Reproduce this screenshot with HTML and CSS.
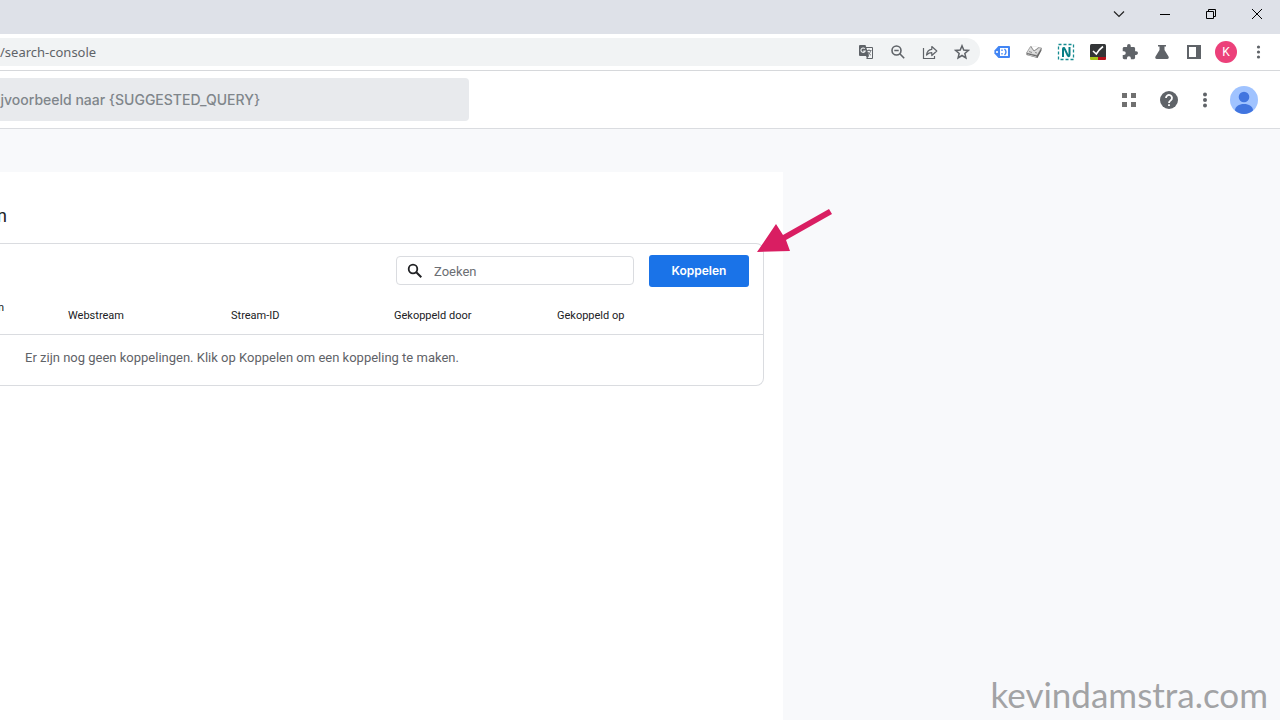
FILE: index.html
```html
<!DOCTYPE html>
<html lang="nl">
<head>
<meta charset="utf-8">
<meta name="viewport" content="width=device-width, initial-scale=1">
<title>Search Console-koppelingen</title>
<link rel="stylesheet" href="styles.css">
</head>
<body>
<div class="window">
  <div class="titlebar">
    <button class="win-btn" aria-label="Tabbladen zoeken"><svg width="12" height="12" viewBox="0 0 12 12"><path d="M1 3.500l5 5 5-5" fill="none" stroke="#222" stroke-width="1.200"/></svg></button>
    <button class="win-btn" aria-label="Minimaliseren"><svg width="12" height="12" viewBox="0 0 12 12"><path d="M1 6.500h10" stroke="#000"/></svg></button>
    <button class="win-btn" aria-label="Verkleinen"><svg width="12" height="12" viewBox="0 0 12 12"><path d="M1.500 3.500h7v7h-7zM3.500 3.500v-2h7v7h-2" fill="none" stroke="#000"/></svg></button>
    <button class="win-btn" aria-label="Sluiten"><svg width="12" height="12" viewBox="0 0 12 12"><path d="M1 1l10 10M11 1L1 11" stroke="#000"/></svg></button>
  </div>

  <div class="toolbar">
    <div class="omnibox">
      <input class="url" type="text" value="/search-console" aria-label="Adres">
      <button class="icon-btn" aria-label="Vertalen"><svg width="16" height="16" viewBox="0 0 16 16"><path d="M7 3.500h7.500v11H8.500" fill="#f1f3f4" stroke="#5f6368"/><path d="M2 1h5.500l3.500 11H2a1 1 0 0 1-1-1V2a1 1 0 0 1 1-1z" fill="#5f6368"/><path d="M6.800 4.700A2.200 2.200 0 1 0 7.200 7H5.200" fill="none" stroke="#f1f3f4" stroke-width="1.100"/><path d="M9 6.500h4.500M11 5.300v1.200M12.700 6.500c-.3 2-1.500 3.300-3 4.300M10 8c.7 1.500 1.700 2.500 3 3.200" fill="none" stroke="#5f6368" stroke-width=".8"/><path d="M8 12h3l-2 2.700z" fill="#5f6368"/></svg></button>
      <button class="icon-btn" aria-label="Uitzoomen"><svg width="16" height="16" viewBox="0 0 16 16"><circle cx="6.500" cy="6.500" r="4.500" fill="none" stroke="#5f6368" stroke-width="1.600"/><path d="M4.300 6.500h4.400M9.800 9.800l4.400 4.400" stroke="#5f6368" stroke-width="1.600"/></svg></button>
      <button class="icon-btn" aria-label="Delen"><svg width="16" height="16" viewBox="0 0 16 16"><path d="M1.500 4v10.500h11v-2.500" fill="none" stroke="#5f6368" stroke-width="1.200"/><path d="M4.500 11c.4-3.600 2.200-5.500 5.300-5.700V2.500l5 4.500-5 4.500V8.700C7.500 8.700 6 9.400 4.500 11z" fill="none" stroke="#5f6368" stroke-width="1.200" stroke-linejoin="round"/></svg></button>
      <button class="icon-btn" aria-label="Bladwijzer"><svg width="16" height="16" viewBox="0 0 16 16"><path d="M8 1.800l1.750 4.200 4.550.4-3.450 3 1.050 4.500L8 11.500l-3.900 2.400 1.050-4.500-3.450-3 4.550-.4z" fill="none" stroke="#5f6368" stroke-width="1.500"/></svg></button>
    </div>
    <div class="extensions">
      <button class="icon-btn" aria-label="Tag Assistant"><svg width="16" height="16" viewBox="0 0 16 16"><path d="M4.500 2H15a1 1 0 0 1 1 1v10a1 1 0 0 1-1 1H4.500L.4 9.500v-3z" fill="#4285f4"/><path d="M6 4h8v8H6z" fill="#fff"/><circle cx="3" cy="8" r="1.100" fill="#fff"/><path d="M8 5.500v1.500M8 9v1.500M10.500 5q3 3 0 6" fill="none" stroke="#4285f4" stroke-width="1.300"/></svg></button>
      <button class="icon-btn" aria-label="Extensie"><svg width="16" height="16" viewBox="0 0 16 16"><path d="M4.500 2.500L15.500 4 11 11.500.5 9z" fill="#ddd" stroke="#888" stroke-width=".7"/><path d="M.5 9L11 11.500 15.500 4v2.500L11.500 14 .5 11z" fill="#666"/><path d="M1.500 10.300l9 2.100v.8l-9-2.100z" fill="#ddd"/><path d="M5.500 2l2.500 4.500L12.500 3z" fill="#fff"/><path d="M5 3l3 4 4.500-3M3 7.500l3 1M9 8.500l2 .5" fill="none" stroke="#777" stroke-width=".8"/></svg></button>
      <button class="icon-btn" aria-label="Extensie N"><svg width="18" height="18" viewBox="0 0 18 18"><rect x="1.500" y="1.500" width="15" height="15" fill="none" stroke="#168c91" stroke-width="1.300" stroke-dasharray="3 2"/><path d="M6 14V6c0-1.400 1.200-1.400 1.700-.2l3 6.500c.6 1.200 1.800 1.200 1.800-.2V4" fill="none" stroke="#087e84" stroke-width="2"/></svg></button>
      <button class="icon-btn" aria-label="Extensie controle"><svg width="16" height="16" viewBox="0 0 16 16"><rect width="16" height="14" rx="1.500" fill="#333537"/><path d="M0 13h8v3H1a1 1 0 0 1-1-1z" fill="#a8c51b"/><path d="M8 13h8v2a1 1 0 0 1-1 1H8z" fill="#b5111b"/><path d="M3 7l3.300 3Q8.500 6 13 2.500" fill="none" stroke="#fff" stroke-width="1.600"/></svg></button>
      <button class="icon-btn" aria-label="Extensies"><svg width="16" height="16" viewBox="1 1 22 22"><path d="M20.500 11H19V7c0-1.100-.9-2-2-2h-4V3.500a2.500 2.500 0 0 0-5 0V5H4c-1.100 0-2 .9-2 2v3.800h1.500a2.700 2.700 0 0 1 0 5.400H2V20c0 1.100.9 2 2 2h3.800v-1.500a2.700 2.700 0 0 1 5.400 0V22H17c1.100 0 2-.9 2-2v-4h1.500a2.500 2.500 0 0 0 0-5z" fill="#5f6368"/></svg></button>
      <button class="icon-btn" aria-label="Experimenten"><svg width="16" height="16" viewBox="0 0 16 16"><path d="M4 1h8v1.500h-1.500V6l4 6.500c.7 1.300 0 2.500-1.300 2.500H2.800c-1.300 0-2-1.200-1.300-2.500l4-6.500V2.500H4z" fill="#5f6368"/></svg></button>
      <button class="icon-btn" aria-label="Zijvenster"><svg width="16" height="16" viewBox="0 0 16 16"><path d="M1 1h14v14H1zM3 3v10h7V3z" fill="#5f6368" fill-rule="evenodd"/></svg></button>
      <button class="icon-btn" aria-label="Profiel"><span class="profile">K</span></button>
      <button class="icon-btn" aria-label="Menu"><svg width="16" height="16" viewBox="0 0 16 16" fill="#5f6368"><circle cx="8.500" cy="3" r="1.600"/><circle cx="8.500" cy="8" r="1.600"/><circle cx="8.500" cy="13" r="1.600"/></svg></button>
    </div>
  </div>

  <header class="app-header">
    <input class="app-search" type="search" placeholder="ijvoorbeeld naar {SUGGESTED_QUERY}" aria-label="Zoeken in Analytics">
    <div class="app-actions">
      <button class="app-btn" aria-label="Apps"><svg width="14" height="14" viewBox="0 0 14 14" fill="#707070"><path d="M0 0h5v5H0zM9 0h5v5H9zM0 9h5v5H0zM9 9h5v5H9z"/></svg></button>
      <button class="app-btn" aria-label="Help"><svg width="18" height="18" viewBox="0 0 18 18"><circle cx="9" cy="9" r="9" fill="#5f6368"/><path d="M6 7a3 3 0 1 1 4.800 2.300C9.600 10.200 9 10.600 9 12" fill="none" stroke="#fff" stroke-width="1.800"/><path d="M8.100 13.200h1.800V15H8.100z" fill="#fff"/></svg></button>
      <button class="app-btn app-more" aria-label="Meer opties"><svg width="16" height="16" viewBox="0 0 16 16" fill="#5f6368"><circle cx="8" cy="2.500" r="2"/><circle cx="8" cy="8" r="2"/><circle cx="8" cy="13.500" r="2"/></svg></button>
      <button class="avatar" aria-label="Account"><svg width="28" height="28" viewBox="0 0 28 28"><circle cx="14" cy="14" r="14" fill="#a0c3ff"/><circle cx="14" cy="11" r="5.300" fill="#4175df"/><path d="M5 24.500C5 20.500 9 18 14 18s9 2.500 9 6.500A14 14 0 0 1 14 28a14 14 0 0 1-9-3.500z" fill="#4175df"/></svg></button>
    </div>
  </header>

  <main class="page">
    <section class="panel">
      <h1 class="panel-title">n</h1>
      <div class="card">
        <div class="card-tools">
          <label class="search">
            <svg width="16" height="16" viewBox="0 0 16 16"><circle cx="6" cy="6" r="4.300" fill="none" stroke="#202124" stroke-width="1.800"/><path d="M9.300 9.300l5 5" stroke="#202124" stroke-width="2"/></svg>
            <input class="search-input" type="text" placeholder="Zoeken" aria-label="Zoeken">
          </label>
          <button class="primary">Koppelen</button>
          <svg class="arrow" width="76" height="46" viewBox="0 0 76 46" aria-hidden="true"><path d="M0 43L19 15l7 11L72 0l3 5-46 26 4 11z" fill="#d91e62"/></svg>
        </div>
        <table class="links">
          <thead>
            <tr><th class="col-first">n</th><th class="col">Webstream</th><th class="col">Stream-ID</th><th class="col">Gekoppeld door</th><th>Gekoppeld op</th></tr>
          </thead>
          <tbody>
            <tr><td colspan="5">Er zijn nog geen koppelingen. Klik op Koppelen om een koppeling te maken.</td></tr>
          </tbody>
        </table>
      </div>
    </section>
    <div class="watermark">kevindamstra.com</div>
  </main>
</div>
</body>
</html>
```
FILE: styles.css
```css
* { box-sizing: border-box; }

body {
  margin: 0;
  font-family: Roboto, "Liberation Sans", sans-serif;
  color: #202124;
  background: #f8f9fb;
}

button {
  padding: 0;
  border: 0;
  background: none;
  font-family: inherit;
}

input {
  min-width: 0;
  padding: 0;
  border: 0;
  outline: 0;
  background: none;
}

svg { display: block; }

.window {
  display: flex;
  flex-direction: column;
  min-height: 100vh;
  overflow: hidden;
}

.titlebar {
  display: flex;
  justify-content: flex-end;
  height: 34px;
  padding-bottom: 6px;
  background: #dee1e8;
}

.win-btn {
  display: grid;
  place-items: center;
  width: 46px;
}

.toolbar {
  display: flex;
  align-items: center;
  gap: 6px;
  height: 37px;
  padding-right: 6px;
  border-bottom: 1px solid #d6d8db;
  background: #fff;
}

.omnibox {
  display: flex;
  flex: 1;
  align-items: center;
  height: 28px;
  padding-right: 2px;
  border-radius: 0 14px 14px 0;
  background: #f1f3f4;
}

.url {
  flex: 1;
  font: 13px "Noto Sans", sans-serif;
  color: #5f6368;
}

.extensions { display: flex; }

.icon-btn {
  display: grid;
  place-items: center;
  width: 32px;
  height: 28px;
}

.profile {
  width: 22px;
  border-radius: 50%;
  background: #ec407a;
  color: #fff;
  font-size: 12px;
  line-height: 22px;
  text-align: center;
}

.app-header {
  display: flex;
  align-items: center;
  justify-content: space-between;
  height: 58px;
  padding-right: 22px;
  border-bottom: 1px solid #dadce0;
  background: #fff;
}

.app-search {
  width: 469px;
  height: 43px;
  border-radius: 0 4px 4px 0;
  background: #e8eaed;
  font: 500 14px Inter, sans-serif;
  text-indent: -3px;
}

.app-search::placeholder { color: #80868b; }

.app-actions {
  display: flex;
  align-items: center;
}

.app-btn {
  display: grid;
  place-items: center;
  width: 40px;
  height: 40px;
}

.app-more { width: 32px; }

.avatar { margin-left: 9px; }

.page {
  display: flex;
  flex: 1;
  align-items: stretch;
  justify-content: space-between;
  padding-top: 43px;
}

.panel {
  width: 783px;
  padding-right: 19px;
  background: #fff;
}

.panel-title {
  margin: 0 0 0 -3px;
  padding: 32px 0 15px;
  font-size: 18px;
  font-weight: 400;
  line-height: 24px;
}

.card {
  border: 1px solid #dadce0;
  border-left: 0;
  border-radius: 0 8px 8px 0;
}

.card-tools {
  position: relative;
  display: flex;
  align-items: flex-start;
  justify-content: flex-end;
  gap: 15px;
  padding: 11px 14px 0 0;
}

.search {
  display: flex;
  align-items: center;
  gap: 11px;
  width: 238px;
  height: 29px;
  margin-top: 1px;
  padding: 0 10px;
  border: 1px solid #dadce0;
  border-radius: 4px;
}

.search-input {
  flex: 1;
  padding-top: 2px;
  font: 13px Roboto, sans-serif;
}

.search-input::placeholder { color: #6b6e73; }

.primary {
  width: 100px;
  height: 32px;
  padding-bottom: 2px;
  border-radius: 3px;
  background: #1a73e8;
  color: #fff;
  font: 600 12px Inter, sans-serif;
}

.arrow {
  position: absolute;
  right: -70px;
  bottom: 32px;
}

.links {
  width: 100%;
  border-collapse: collapse;
  table-layout: fixed;
}

.links th {
  height: 47px;
  padding: 12px 0 0;
  font-size: 11px;
  font-weight: 400;
  line-height: 16px;
  text-align: left;
}

.links .col-first {
  width: 68px;
  padding: 0 0 4px;
  text-indent: -2px;
}

.links .col { width: 163px; }

.links td {
  height: 51px;
  padding: 0 0 5px 25px;
  border-top: 1px solid #dadce0;
  color: #5f6368;
  font-size: 13px;
}

.watermark {
  align-self: flex-end;
  padding: 0 12px 4px 0;
  color: #a2a3a5;
  font: 400 35px/44px Lato, sans-serif;
}
```
